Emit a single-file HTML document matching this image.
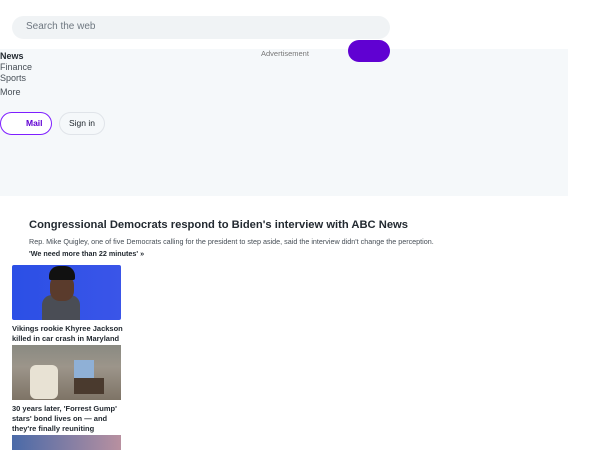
<!DOCTYPE html>
<html><head><style>
body{margin:0;width:600px;height:450px;overflow:hidden;background:#fff;font-family:"Liberation Sans",sans-serif;position:relative}
div,span{position:absolute}
.t{white-space:nowrap}
</style></head><body>
<div style="left:12px;top:16px;width:378px;height:23px;background:#f0f3f5;border-radius:12px"></div>
<div class="t" style="left:26px;top:21px;font-size:10px;color:#6e7780">Search the web</div>
<div style="left:0;top:49px;width:568px;height:147px;background:#f5f8fa"></div>
<div class="t" style="left:261px;top:49px;font-size:7.5px;color:#777">Advertisement</div>
<div style="left:348px;top:40px;width:42px;height:22px;background:#6001d2;border-radius:11px"></div>
<div class="t" style="left:0;top:51px;font-size:9px;color:#232a31;font-weight:bold">News</div>
<div class="t" style="left:0;top:62px;font-size:9px;color:#464e56">Finance</div>
<div class="t" style="left:0;top:73px;font-size:9px;color:#464e56">Sports</div>
<div class="t" style="left:0;top:87px;font-size:9px;color:#464e56">More</div>
<div style="left:0;top:112px;width:50px;height:21px;border:1px solid #7e1fff;border-radius:12px;background:#fff"></div>
<div class="t" style="left:26px;top:118px;font-size:8.5px;color:#6001d2;font-weight:bold">Mail</div>
<div style="left:59px;top:112px;width:44px;height:21px;border:1px solid #e0e4e9;border-radius:12px"></div>
<div class="t" style="left:69px;top:118px;font-size:8.5px;color:#232a31">Sign in</div>
<div class="t" style="left:29px;top:219px;font-size:11.2px;font-weight:bold;color:#232a31">Congressional Democrats respond to Biden's interview with ABC News</div>
<div class="t" style="left:29px;top:237px;font-size:7.2px;color:#464e56">Rep. Mike Quigley, one of five Democrats calling for the president to step aside, said the interview didn't change the perception.</div>
<div class="t" style="left:29px;top:249px;font-size:7.2px;font-weight:bold;color:#232a31">'We need more than 22 minutes' »</div>
<div style="left:12px;top:265px;width:109px;height:55px;background:linear-gradient(90deg,#2b4fe6,#3a55e8);border-radius:2px;overflow:hidden">
 <div style="left:30px;top:30px;width:38px;height:30px;background:#4a4d55;border-radius:10px 10px 0 0"></div>
 <div style="left:38px;top:10px;width:24px;height:26px;background:#5a3b2c;border-radius:10px"></div>
 <div style="left:37px;top:1px;width:26px;height:14px;background:#111;border-radius:10px 10px 2px 2px"></div>
</div>
<div style="left:12px;top:324px;font-size:7.5px;font-weight:bold;color:#232a31;line-height:10px;width:112px">Vikings rookie Khyree Jackson killed in car crash in Maryland</div>
<div style="left:12px;top:345px;width:109px;height:55px;background:linear-gradient(180deg,#8a8a82 0%,#9c958a 40%,#7e7466 100%);overflow:hidden">
 <div style="left:18px;top:20px;width:28px;height:34px;background:#e8e2d4;border-radius:6px"></div>
 <div style="left:62px;top:15px;width:20px;height:18px;background:#8fb0d6"></div>
 <div style="left:62px;top:33px;width:30px;height:16px;background:#4a3a2e"></div>
</div>
<div style="left:12px;top:404px;font-size:7.5px;font-weight:bold;color:#232a31;line-height:10px;width:112px">30 years later, 'Forrest Gump' stars' bond lives on — and they're finally reuniting</div>
<div style="left:12px;top:435px;width:109px;height:15px;background:linear-gradient(90deg,#4a6aa8,#b890a0)"></div>
</body></html>
